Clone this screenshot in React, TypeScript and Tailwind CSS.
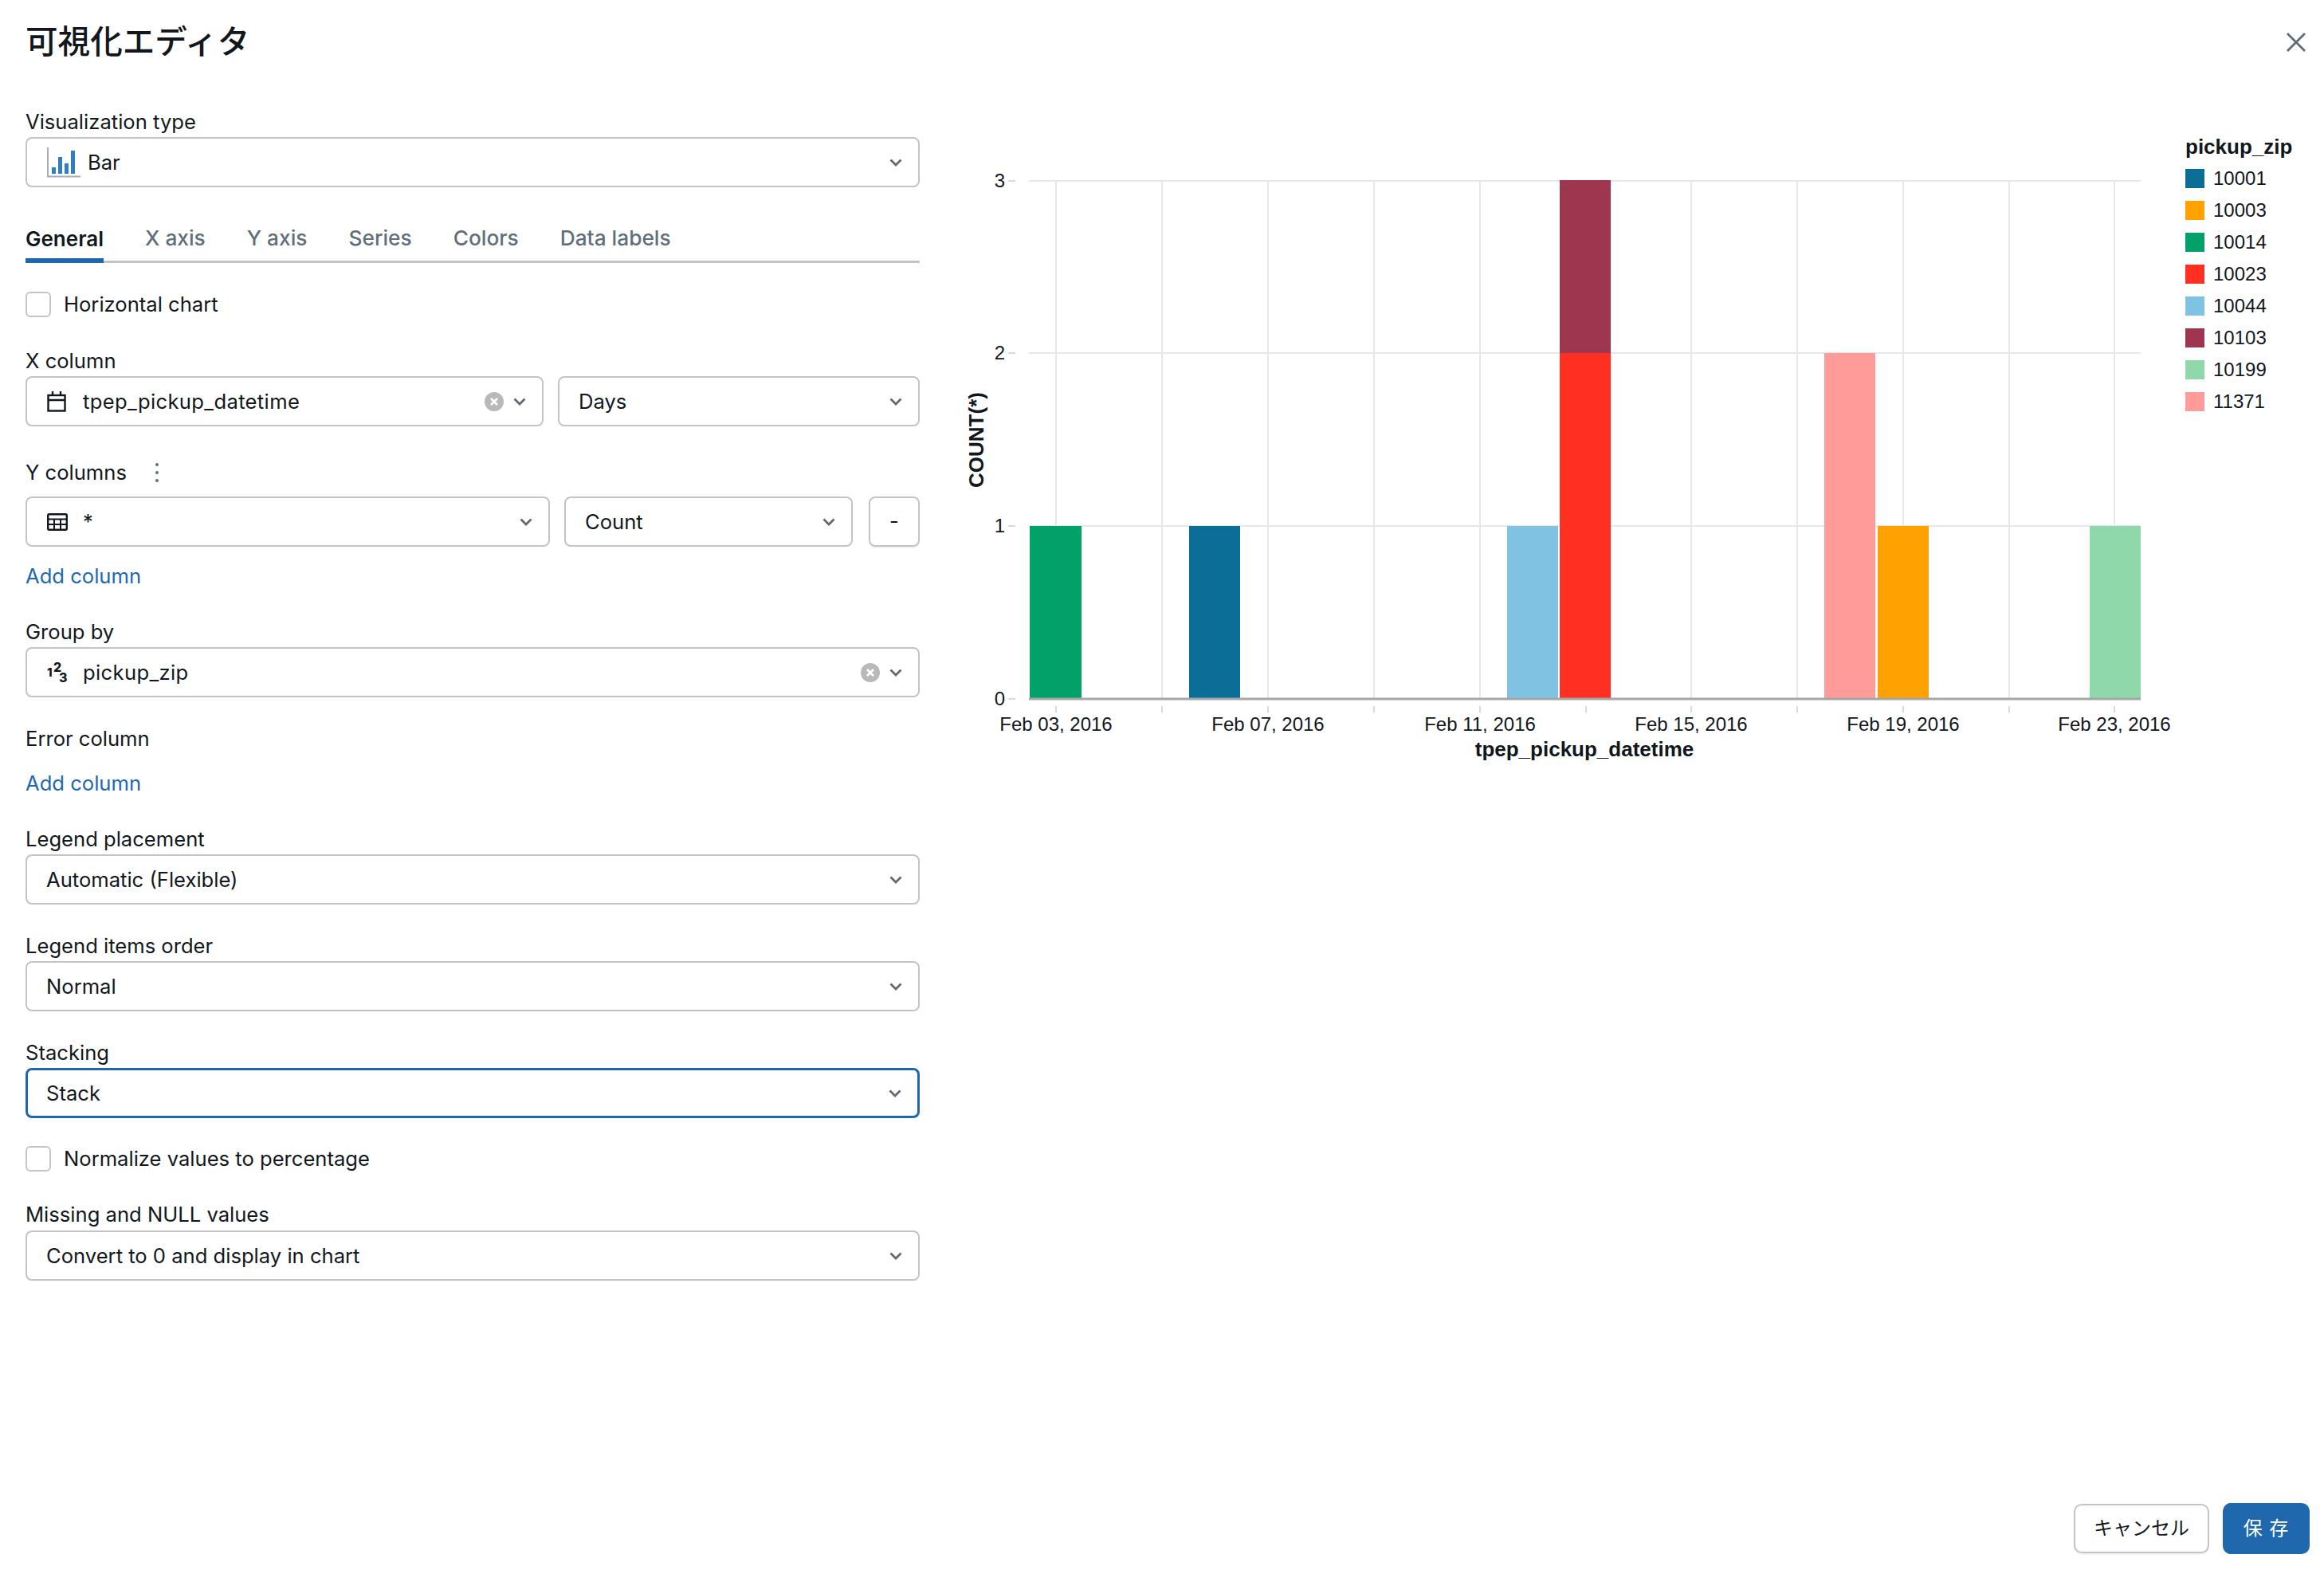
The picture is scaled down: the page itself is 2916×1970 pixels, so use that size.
import type { ReactNode } from "react";

const FONT = "font-['Inter','Noto_Sans_CJK_JP',sans-serif]";

const GRID_X = [1325, 1458, 1591, 1724, 1857, 1990, 2122, 2255, 2388, 2521, 2653];
const X_LABELS = [
  { x: 1325, text: "Feb 03, 2016" },
  { x: 1591, text: "Feb 07, 2016" },
  { x: 1857, text: "Feb 11, 2016" },
  { x: 2122, text: "Feb 15, 2016" },
  { x: 2388, text: "Feb 19, 2016" },
  { x: 2653, text: "Feb 23, 2016" },
];
const GRID_Y = [
  { y: 227, label: "3" },
  { y: 443, label: "2" },
  { y: 660, label: "1" },
];
const BARS = [
  { x: 1292, w: 65, y: 660, h: 217, color: "#03a16a" },
  { x: 1492, w: 64, y: 660, h: 217, color: "#0b6e96" },
  { x: 1891, w: 64, y: 660, h: 217, color: "#7fc2e2" },
  { x: 1957, w: 64, y: 443, h: 434, color: "#ff3021" },
  { x: 1957, w: 64, y: 226, h: 217, color: "#9e364f" },
  { x: 2289, w: 64, y: 443, h: 434, color: "#ff9c99" },
  { x: 2356, w: 64, y: 660, h: 217, color: "#ffa100" },
  { x: 2622, w: 64, y: 660, h: 217, color: "#8fd8a9" },
];
const LEGEND = [
  { zip: "10001", color: "#0b6e96" },
  { zip: "10003", color: "#ffa100" },
  { zip: "10014", color: "#03a16a" },
  { zip: "10023", color: "#ff3021" },
  { zip: "10044", color: "#7fc2e2" },
  { zip: "10103", color: "#9e364f" },
  { zip: "10199", color: "#8fd8a9" },
  { zip: "11371", color: "#ff9c99" },
];
const TABS = ["General", "X axis", "Y axis", "Series", "Colors", "Data labels"];

function Chevron() {
  return (
    <svg width="16" height="10" viewBox="0 0 16 10" fill="none" className="shrink-0">
      <path d="M1.5 1.5 8 8l6.500-6.500" stroke="#5f6a73" strokeWidth="2.800" />
    </svg>
  );
}

function ClearIcon() {
  return (
    <svg width="24" height="24" viewBox="0 0 24 24" className="shrink-0">
      <circle cx="12" cy="12" r="12" fill="#b9b9b9" />
      <path d="M8 8l8 8M16 8l-8 8" stroke="#fff" strokeWidth="2.800" />
    </svg>
  );
}

function BarIcon() {
  return (
    <svg width="42" height="38" viewBox="0 0 42 38" className="shrink-0">
      <path d="M1 0v36.500h41" fill="none" stroke="#a3afb8" strokeWidth="2" />
      <rect x="6" y="25" width="5" height="8" fill="#2f7fc8" />
      <rect x="14" y="12" width="5" height="21" fill="#2f7fc8" />
      <rect x="22" y="20" width="5" height="13" fill="#2f7fc8" />
      <rect x="30" y="4" width="5" height="29" fill="#2f7fc8" />
    </svg>
  );
}

function CalendarIcon() {
  return (
    <svg width="24" height="26" viewBox="0 0 24 26" fill="none" className="shrink-0">
      <rect x="1.500" y="5" width="21" height="19.500" stroke="#11171c" strokeWidth="2.400" />
      <path d="M1.500 11h21M7 0v6M17 0v6" stroke="#11171c" strokeWidth="2.400" />
    </svg>
  );
}

function TableIcon() {
  return (
    <svg width="26" height="22" viewBox="0 0 26 22" fill="none" className="shrink-0">
      <rect x="1.200" y="1.200" width="23.600" height="19.600" rx="1.500" stroke="#11171c" strokeWidth="2.400" />
      <path d="M1 7.500h24M1 14h24M9 7v14M17 7v14" stroke="#11171c" strokeWidth="2" />
    </svg>
  );
}

function NumberIcon() {
  return (
    <svg
      width="26"
      height="28"
      viewBox="0 0 26 28"
      className="shrink-0 overflow-visible"
      fill="#11171c"
      fontFamily="Inter, sans-serif"
      fontWeight="800"
    >
      <text x="0" y="19" fontSize="15">1</text>
      <text x="8" y="13" fontSize="16">2</text>
      <text x="15" y="26" fontSize="16">3</text>
    </svg>
  );
}

function Label({ children, className = "" }: { children: ReactNode; className?: string }) {
  return <div className={`flex h-[38px] items-center ${className}`}>{children}</div>;
}

function Select({
  value,
  icon,
  clearable,
  focused,
  className = "",
}: {
  value: string;
  icon?: ReactNode;
  clearable?: boolean;
  focused?: boolean;
  className?: string;
}) {
  return (
    <div
      className={`flex h-[63px] items-center rounded-lg bg-white pr-[20px] ${
        focused ? "border-[3px] border-[#2068ae] pl-[23px]" : "border-2 border-[#c4c4c4] pl-[24px]"
      } ${className}`}
    >
      {icon && <span className="ml-[1px] mr-[9px] flex w-[36px] items-center">{icon}</span>}
      <span className="flex-1 truncate pt-[1px]">{value}</span>
      {clearable && <span className="mr-[12px] flex"><ClearIcon /></span>}
      <Chevron />
    </div>
  );
}

function Checkbox({ label, className = "" }: { label: string; className?: string }) {
  return (
    <div className={`flex h-[32px] items-center gap-[16px] ${className}`}>
      <span className="h-[32px] w-[32px] rounded-md border-2 border-[#c4c4c4] bg-white" />
      <span>{label}</span>
    </div>
  );
}

function AddColumn({ className = "" }: { className?: string }) {
  return <div className={`flex h-[38px] items-center text-[#2068ae] ${className}`}>Add column</div>;
}

// vega style chart, drawn in page coordinates and shifted through the viewBox
function Chart() {
  return (
    <svg
      width="1676"
      height="820"
      viewBox="1200 150 1676 820"
      className="shrink-0"
      fontFamily="'Liberation Sans', Arial, sans-serif"
      fill="#11171c"
    >
      {GRID_Y.map((g) => (
        <g key={g.y}>
          <line x1="1291" x2="2686" y1={g.y} y2={g.y} stroke="#e8e8e8" strokeWidth="2" />
          <line x1="1265" x2="1274" y1={g.y} y2={g.y} stroke="#d9d9d9" strokeWidth="2" />
          <text x="1261" y={g.y + 8} textAnchor="end" fontSize="24">{g.label}</text>
        </g>
      ))}
      {GRID_X.map((x) => (
        <g key={x}>
          <line x1={x} x2={x} y1="227" y2="877" stroke="#e8e8e8" strokeWidth="2" />
          <line x1={x} x2={x} y1="886" y2="894" stroke="#d9d9d9" strokeWidth="2" />
        </g>
      ))}
      {BARS.map((b) => (
        <rect key={b.x + b.color} x={b.x} y={b.y} width={b.w} height={b.h} fill={b.color} />
      ))}
      <line x1="1291" x2="2686" y1="877" y2="877" stroke="#a6a6a6" strokeWidth="3" />
      <line x1="1265" x2="1274" y1="877" y2="877" stroke="#d9d9d9" strokeWidth="2" />
      <text x="1261" y="885" textAnchor="end" fontSize="24">0</text>
      {X_LABELS.map((l) => (
        <text key={l.x} x={l.x} y="917" textAnchor="middle" fontSize="24">{l.text}</text>
      ))}
      <text x="1988" y="949" textAnchor="middle" fontSize="26" fontWeight="700">tpep_pickup_datetime</text>
      <text transform="translate(1234 552) rotate(-90)" textAnchor="middle" fontSize="26" fontWeight="700">COUNT(*)</text>
      <text x="2742" y="193" fontSize="26" fontWeight="700">pickup_zip</text>
      {LEGEND.map((l, i) => (
        <g key={l.zip}>
          <rect x="2742" y={212 + i * 40} width="24" height="24" fill={l.color} />
          <text x="2777" y={231.500 + i * 40} fontSize="24">{l.zip}</text>
        </g>
      ))}
    </svg>
  );
}

export default function App() {
  return (
    <div className={`flex h-[1970px] w-[2916px] flex-col bg-white text-[25.6px] text-[#11171c] ${FONT}`}>
      <header className="flex h-[106px] shrink-0 items-center justify-between pl-[32px] pr-[23px]">
        <h1 className="text-[40.6px] font-medium leading-none">可視化エディタ</h1>
        <svg width="24" height="24" viewBox="0 0 24 24" fill="none">
          <path d="M1 1l22 22M23 1L1 23" stroke="#5f6a73" strokeWidth="2.800" />
        </svg>
      </header>

      <main className="flex min-h-0 flex-1">
        <div className="ml-[32px] flex w-[1122px] shrink-0 flex-col">
          <Label className="mt-[28px]">Visualization type</Label>
          <Select value="Bar" icon={<BarIcon />} className="[&>span:first-child]:w-[42px]" />

          <div className="mt-[35px] flex h-[60px] gap-[52px] border-b-[3px] border-[#c4c4c4] text-[26.3px] font-medium text-[#5f6f7c]">
            {TABS.map((tab, i) => (
              <div
                key={tab}
                className={
                  i === 0
                    ? "-mb-[3px] flex items-center border-b-[6px] border-[#2068ae] pt-[4px] text-[26px] font-semibold text-[#11171c]"
                    : "flex items-center pt-[1px]"
                }
              >
                {tab}
              </div>
            ))}
          </div>

          <Checkbox label="Horizontal chart" className="mt-[36px]" />

          <Label className="mt-[36px]">X column</Label>
          <div className="flex gap-[18px]">
            <Select
              value="tpep_pickup_datetime"
              icon={<CalendarIcon />}
              clearable
              className="w-[650px] tracking-[0.35px]"
            />
            <Select value="Days" className="flex-1" />
          </div>

          <Label className="mt-[39px]">
            Y columns
            <svg width="6" height="26" viewBox="0 0 6 26" className="ml-[35px]" fill="#5f6f7c">
              <circle cx="3" cy="3" r="2" />
              <circle cx="3" cy="13" r="2" />
              <circle cx="3" cy="23" r="2" />
            </svg>
          </Label>
          <div className="mt-[11px] flex gap-[18px]">
            <Select value="*" icon={<TableIcon />} className="w-[658px]" />
            <Select value="Count" className="w-[362px]" />
            <div className="ml-[2px] flex h-[63px] flex-1 items-center justify-center rounded-lg border-2 border-[#c4c4c4] shadow-[0_2px_1px_rgba(0,0,0,0.05)]">
              -
            </div>
          </div>
          <AddColumn className="mt-[18px]" />

          <Label className="mt-[32px]">Group by</Label>
          <Select value="pickup_zip" icon={<NumberIcon />} clearable className="tracking-[0.35px]" />

          <Label className="mt-[33px]">Error column</Label>
          <AddColumn className="mt-[18px]" />

          <Label className="mt-[32px]">Legend placement</Label>
          <Select value="Automatic (Flexible)" />

          <Label className="mt-[33px]">Legend items order</Label>
          <Select value="Normal" />

          <Label className="mt-[33px]">Stacking</Label>
          <Select value="Stack" focused />

          <Checkbox label="Normalize values to percentage" className="mt-[35px]" />

          <Label className="mt-[35px]">Missing and NULL values</Label>
          <Select value="Convert to 0 and display in chart" className="mt-[1px]" />
        </div>

        <div className="ml-[46px] flex-1 pt-[44px]">
          <Chart />
        </div>
      </main>

      <footer className="flex shrink-0 items-center justify-end gap-[17px] pb-[20px] pr-[18px] text-[24px]">
        <button className="h-[62px] w-[170px] rounded-[10px] border-2 border-[#c4c4c4] bg-white shadow-[0_2px_1px_rgba(0,0,0,0.05)]">
          キャンセル
        </button>
        <button className="h-[64px] w-[109px] rounded-[10px] bg-[#2068ae] tracking-[1px] text-white">保 存</button>
      </footer>
    </div>
  );
}
